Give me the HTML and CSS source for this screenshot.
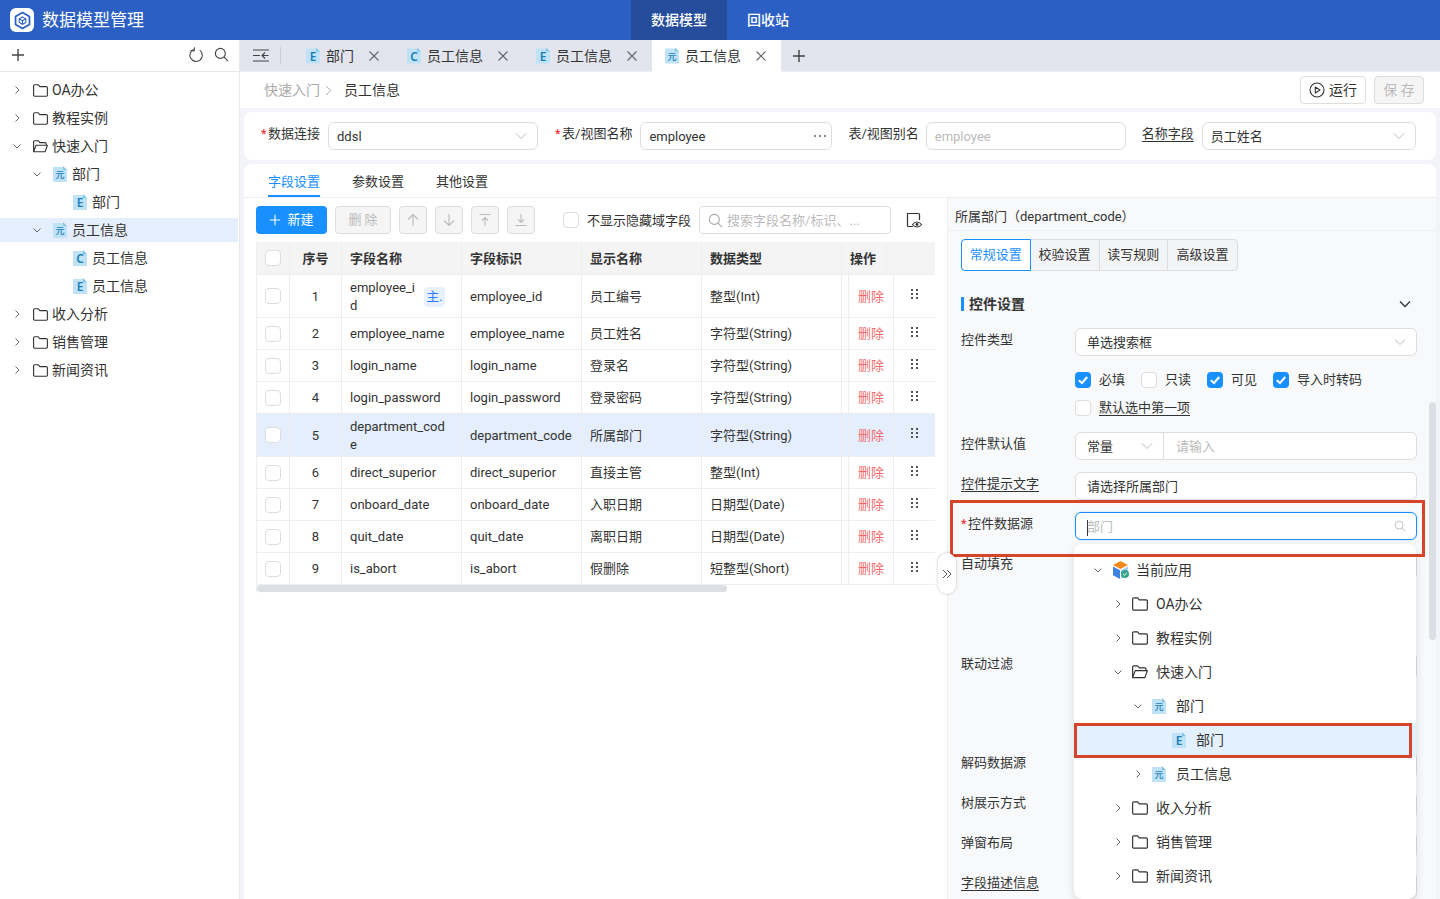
FILE: index.html
```html
<!DOCTYPE html>
<html lang="zh-CN">
<head>
    <meta charset="UTF-8">
    <meta name="viewport" content="width=device-width, initial-scale=1.0">
    <title>数据模型管理</title>
    <link rel="stylesheet" href="styles.css">
</head>
<body>
    <svg class="defs" width="0" height="0">
        <symbol id="folder" viewBox="0 0 15 13"><path d="M.6 2A1.2 1.2 0 0 1 1.8.7h3.4l1.6 1.9h6.4a1.2 1.2 0 0 1 1.2 1.2v7.3a1.2 1.2 0 0 1-1.2 1.2H1.8A1.2 1.2 0 0 1 .6 11.100z" fill="none" stroke="#333" stroke-width="1.1"/></symbol>
        <symbol id="folder-open" viewBox="0 0 15 13"><path d="M.6 11.500V2A1.200 1.200 0 0 1 1.800.7h3.400l1.600 1.900h5.400a1 1 0 0 1 1 1v1.600M.6 11.800 3 5.200h11.400l-2.300 6.600z" fill="none" stroke="#333" stroke-width="1.100" stroke-linejoin="round"/></symbol>
        <symbol id="chev-r" viewBox="0 0 10 10"><path d="M3.500 1.500 7 5 3.500 8.500" fill="none" stroke="#666" stroke-width="1"/></symbol>
        <symbol id="chev-d" viewBox="0 0 10 10"><path d="M1.500 3.500 5 7l3.500-3.500" fill="none" stroke="#666" stroke-width="1"/></symbol>
        <symbol id="chev-big" viewBox="0 0 12 12"><path d="M1 3.500 6 8.500l5-5" fill="none" stroke="#bbb" stroke-width="1"/></symbol>
        <symbol id="x" viewBox="0 0 12 12"><path d="M1.500 1.500l9 9m0-9-9 9" fill="none" stroke="#666" stroke-width="1.100"/></symbol>
        <symbol id="plus" viewBox="0 0 14 14"><path d="M7 1v12M1 7h12" fill="none" stroke="#444" stroke-width="1.400"/></symbol>
        <symbol id="search" viewBox="0 0 16 16"><circle cx="6.800" cy="6.800" r="5.300" fill="none" stroke="currentColor" stroke-width="1.200"/><path d="M10.700 10.700 15 15" fill="none" stroke="currentColor" stroke-width="1.200"/></symbol>
        <symbol id="dots" viewBox="0 0 7 10"><path d="M0 0h2v2H0zM5 0h2v2H5zM0 4h2v2H0zM5 4h2v2H5zM0 8h2v2H0zM5 8h2v2H5z" fill="#555"/></symbol>
        <symbol id="check" viewBox="0 0 16 16"><path d="M3.800 8.200 7 11l5.200-6" fill="none" stroke="#fff" stroke-width="2"/></symbol>
    </svg>

    <header class="topbar">
        <div class="brand">
            <span class="logo">
                <svg width="19" height="19" viewBox="0 0 24 24"><path d="M12 2 20.800 7v10L12 22l-8.800-5V7z" fill="none" stroke="#2b5fc4" stroke-width="2.200" stroke-linejoin="round"/><path d="M12 7.500l4.200 2.300v4.600L12 16.800l-4.200-2.400V9.800zM7.800 9.800 12 12.200l4.200-2.400M12 12.200v4.600" fill="none" stroke="#2b5fc4" stroke-width="1.300"/></svg>
            </span>
            <span class="brand-name">数据模型管理</span>
        </div>
        <nav class="topnav">
            <a class="topnav-item active">数据模型</a>
            <a class="topnav-item">回收站</a>
        </nav>
    </header>

    <div class="app">
        <aside class="sidebar">
            <div class="side-tools">
                <svg class="ic14"><use href="#plus"/></svg>
                <span class="side-tools-right">
                    <svg width="16" height="16" viewBox="0 0 16 16"><path d="M5.500 2.600A6.200 6.200 0 1 0 11 2.700M5.500 .7v3.600H2" fill="none" stroke="#444" stroke-width="1.100" transform="rotate(8 8 8)"/></svg>
                    <svg class="ic-search" width="15" height="15"><use href="#search"/></svg>
                </span>
            </div>
            <ul class="tree">
                <li class="node"><svg class="chev"><use href="#chev-r"/></svg><svg class="fold"><use href="#folder"/></svg>OA办公</li>
                <li class="node"><svg class="chev"><use href="#chev-r"/></svg><svg class="fold"><use href="#folder"/></svg>教程实例</li>
                <li class="node"><svg class="chev"><use href="#chev-d"/></svg><svg class="fold"><use href="#folder-open"/></svg>快速入门</li>
                <li class="node lv1"><svg class="chev"><use href="#chev-d"/></svg><span class="fi fi-y">元</span>部门</li>
                <li class="node lv2"><span class="chev"></span><span class="fi">E</span>部门</li>
                <li class="node lv1 current"><svg class="chev"><use href="#chev-d"/></svg><span class="fi fi-y">元</span>员工信息</li>
                <li class="node lv2"><span class="chev"></span><span class="fi">C</span>员工信息</li>
                <li class="node lv2"><span class="chev"></span><span class="fi">E</span>员工信息</li>
                <li class="node"><svg class="chev"><use href="#chev-r"/></svg><svg class="fold"><use href="#folder"/></svg>收入分析</li>
                <li class="node"><svg class="chev"><use href="#chev-r"/></svg><svg class="fold"><use href="#folder"/></svg>销售管理</li>
                <li class="node"><svg class="chev"><use href="#chev-r"/></svg><svg class="fold"><use href="#folder"/></svg>新闻资讯</li>
            </ul>
        </aside>

        <main class="main">
            <div class="tabbar">
                <span class="tab-toggle">
                    <svg width="16" height="13" viewBox="0 0 16 13"><path d="M0 1h16M0 12h16M0 6.500h7M15.500 6.500H9M12 3.500 9 6.500l3 3" fill="none" stroke="#444" stroke-width="1.100"/></svg>
                </span>
                <div class="tab tab-first"><span class="fi">E</span>部门<svg class="tab-x"><use href="#x"/></svg></div>
                <div class="tab"><span class="fi">C</span>员工信息<svg class="tab-x"><use href="#x"/></svg></div>
                <div class="tab"><span class="fi">E</span>员工信息<svg class="tab-x"><use href="#x"/></svg></div>
                <div class="tab active"><span class="fi fi-y">元</span>员工信息<svg class="tab-x"><use href="#x"/></svg></div>
                <svg class="tab-add"><use href="#plus"/></svg>
            </div>

            <div class="crumbs">
                <span class="crumb-parent">快速入门</span>
                <svg class="crumb-sep" viewBox="0 0 8 12"><path d="M1.500 1 6.500 6l-5 5" fill="none" stroke="#999" stroke-width="1"/></svg>
                <span class="crumb-now">员工信息</span>
                <span class="crumb-actions">
                    <button class="btn-run"><svg width="16" height="16" viewBox="0 0 16 16"><circle cx="8" cy="8" r="7" fill="none" stroke="#333" stroke-width="1.100"/><path d="M6.300 5v6l4.700-3z" fill="none" stroke="#333" stroke-width="1.100" stroke-linejoin="round"/></svg>运行</button>
                    <button class="btn-save">保 存</button>
                </span>
            </div>

            <section class="conn-card">
                <label class="flabel w-conn"><i>*</i>数据连接</label>
                <div class="inp w210">ddsl<svg class="inp-chev"><use href="#chev-big"/></svg></div>
                <label class="flabel w-table"><i>*</i>表/视图名称</label>
                <div class="inp w192">employee<svg class="more" width="12" height="4" viewBox="0 0 12 4"><path d="M0 1h2v2H0zM5 1h2v2H5zM10 1h2v2h-2z" fill="#888"/></svg></div>
                <label class="flabel w-alias">表/视图别名</label>
                <div class="inp w200 ph">employee</div>
                <label class="flabel w-name"><u>名称字段</u></label>
                <div class="inp w214">员工姓名<svg class="inp-chev"><use href="#chev-big"/></svg></div>
            </section>

            <section class="work-card">
                <div class="subtabs">
                    <a class="subtab active">字段设置</a>
                    <a class="subtab">参数设置</a>
                    <a class="subtab">其他设置</a>
                </div>
                <div class="split">
                    <div class="fields">
                        <div class="toolbar">
                            <button class="btn-new"><svg width="12" height="12" viewBox="0 0 14 14"><path d="M7 1v12M1 7h12" fill="none" stroke="#fff" stroke-width="1.300"/></svg>新建</button>
                            <button class="btn-off w56">删 除</button>
                            <button class="btn-off sq"><svg width="14" height="14" viewBox="0 0 14 14"><path d="M7 13V1.500M2 6.500l5-5 5 5" fill="none" stroke="#bbb" stroke-width="1.100"/></svg></button>
                            <button class="btn-off sq"><svg width="14" height="14" viewBox="0 0 14 14"><path d="M7 1v11.500M2 7.500l5 5 5-5" fill="none" stroke="#bbb" stroke-width="1.100"/></svg></button>
                            <button class="btn-off sq"><svg width="14" height="14" viewBox="0 0 14 14"><path d="M1.500 1.500h11M7 13V4.500M4 7.500l3-3 3 3" fill="none" stroke="#bbb" stroke-width="1.100"/></svg></button>
                            <button class="btn-off sq"><svg width="14" height="14" viewBox="0 0 14 14"><path d="M1.500 12.500h11M7 1v8.500M4 6.500l3 3 3-3" fill="none" stroke="#bbb" stroke-width="1.100"/></svg></button>
                            <span class="cb hide-cb"></span><span class="hide-text">不显示隐藏域字段</span>
                            <div class="search"><svg class="search-ic" width="15" height="15"><use href="#search"/></svg>搜索字段名称/标识、...</div>
                            <svg class="eye" width="16" height="16" viewBox="0 0 16 16"><path d="M7 14.500H2.500a1 1 0 0 1-1-1V1.500h11a1 1 0 0 1 1 1V8" fill="none" stroke="#333" stroke-width="1.200"/><path d="M6.500 12.500c2.700-3.300 6.300-3.300 9 0-2.700 3.300-6.300 3.300-9 0z" fill="#fff" stroke="#333" stroke-width="1.100"/><circle cx="11" cy="12.500" r="1.400" fill="#333"/></svg>
                        </div>

                        <div class="grid">
                            <div class="row head">
                                <div class="cell c-check"><span class="cb"></span></div>
                                <div class="cell c-no">序号</div>
                                <div class="cell c-text">字段名称</div>
                                <div class="cell c-text">字段标识</div>
                                <div class="cell c-text">显示名称</div>
                                <div class="cell c-type">数据类型</div>
                                <div class="cell c-ophead">操作</div>
                                <div class="cell c-rest"></div>
                            </div>
                            <div class="row tall">
                                <div class="cell c-check"><span class="cb"></span></div>
                                <div class="cell c-no">1</div>
                                <div class="cell c-text"><span class="wrap short">employee_id</span><span class="tag">主.</span></div>
                                <div class="cell c-text">employee_id</div>
                                <div class="cell c-text">员工编号</div>
                                <div class="cell c-type">整型(Int)</div>
                                <div class="cell c-gap"></div>
                                <div class="cell c-op">删除</div>
                                <div class="cell c-drag"><svg class="dots"><use href="#dots"/></svg></div>
                            </div>
                            <div class="row">
                                <div class="cell c-check"><span class="cb"></span></div>
                                <div class="cell c-no">2</div>
                                <div class="cell c-text">employee_name</div>
                                <div class="cell c-text">employee_name</div>
                                <div class="cell c-text">员工姓名</div>
                                <div class="cell c-type">字符型(String)</div>
                                <div class="cell c-gap"></div>
                                <div class="cell c-op">删除</div>
                                <div class="cell c-drag"><svg class="dots"><use href="#dots"/></svg></div>
                            </div>
                            <div class="row">
                                <div class="cell c-check"><span class="cb"></span></div>
                                <div class="cell c-no">3</div>
                                <div class="cell c-text">login_name</div>
                                <div class="cell c-text">login_name</div>
                                <div class="cell c-text">登录名</div>
                                <div class="cell c-type">字符型(String)</div>
                                <div class="cell c-gap"></div>
                                <div class="cell c-op">删除</div>
                                <div class="cell c-drag"><svg class="dots"><use href="#dots"/></svg></div>
                            </div>
                            <div class="row">
                                <div class="cell c-check"><span class="cb"></span></div>
                                <div class="cell c-no">4</div>
                                <div class="cell c-text">login_password</div>
                                <div class="cell c-text">login_password</div>
                                <div class="cell c-text">登录密码</div>
                                <div class="cell c-type">字符型(String)</div>
                                <div class="cell c-gap"></div>
                                <div class="cell c-op">删除</div>
                                <div class="cell c-drag"><svg class="dots"><use href="#dots"/></svg></div>
                            </div>
                            <div class="row tall picked">
                                <div class="cell c-check"><span class="cb"></span></div>
                                <div class="cell c-no">5</div>
                                <div class="cell c-text"><span class="wrap">department_code</span></div>
                                <div class="cell c-text">department_code</div>
                                <div class="cell c-text">所属部门</div>
                                <div class="cell c-type">字符型(String)</div>
                                <div class="cell c-gap"></div>
                                <div class="cell c-op">删除</div>
                                <div class="cell c-drag"><svg class="dots"><use href="#dots"/></svg></div>
                            </div>
                            <div class="row">
                                <div class="cell c-check"><span class="cb"></span></div>
                                <div class="cell c-no">6</div>
                                <div class="cell c-text">direct_superior</div>
                                <div class="cell c-text">direct_superior</div>
                                <div class="cell c-text">直接主管</div>
                                <div class="cell c-type">整型(Int)</div>
                                <div class="cell c-gap"></div>
                                <div class="cell c-op">删除</div>
                                <div class="cell c-drag"><svg class="dots"><use href="#dots"/></svg></div>
                            </div>
                            <div class="row">
                                <div class="cell c-check"><span class="cb"></span></div>
                                <div class="cell c-no">7</div>
                                <div class="cell c-text">onboard_date</div>
                                <div class="cell c-text">onboard_date</div>
                                <div class="cell c-text">入职日期</div>
                                <div class="cell c-type">日期型(Date)</div>
                                <div class="cell c-gap"></div>
                                <div class="cell c-op">删除</div>
                                <div class="cell c-drag"><svg class="dots"><use href="#dots"/></svg></div>
                            </div>
                            <div class="row">
                                <div class="cell c-check"><span class="cb"></span></div>
                                <div class="cell c-no">8</div>
                                <div class="cell c-text">quit_date</div>
                                <div class="cell c-text">quit_date</div>
                                <div class="cell c-text">离职日期</div>
                                <div class="cell c-type">日期型(Date)</div>
                                <div class="cell c-gap"></div>
                                <div class="cell c-op">删除</div>
                                <div class="cell c-drag"><svg class="dots"><use href="#dots"/></svg></div>
                            </div>
                            <div class="row">
                                <div class="cell c-check"><span class="cb"></span></div>
                                <div class="cell c-no">9</div>
                                <div class="cell c-text">is_abort</div>
                                <div class="cell c-text">is_abort</div>
                                <div class="cell c-text">假删除</div>
                                <div class="cell c-type">短整型(Short)</div>
                                <div class="cell c-gap"></div>
                                <div class="cell c-op">删除</div>
                                <div class="cell c-drag"><svg class="dots"><use href="#dots"/></svg></div>
                            </div>
                            <div class="grid-scroll"><span class="grid-thumb"></span></div>
                        </div>
                    </div>

                    <div class="props">
                        <div class="props-title">所属部门（department_code）</div>
                        <div class="seg">
                            <a class="seg-item active">常规设置</a>
                            <a class="seg-item">校验设置</a>
                            <a class="seg-item">读写规则</a>
                            <a class="seg-item">高级设置</a>
                        </div>
                        <div class="sec-title"><span>控件设置</span><svg width="12" height="12" viewBox="0 0 12 12"><path d="M1 3.500 6 8.500l5-5" fill="none" stroke="#333" stroke-width="1.300"/></svg></div>

                        <div class="pf"><label class="pf-label">控件类型</label><div class="inp grow">单选搜索框<svg class="inp-chev"><use href="#chev-big"/></svg></div></div>
                        <div class="checks">
                            <span class="ck"><span class="cb on"><svg width="16" height="16"><use href="#check"/></svg></span>必填</span>
                            <span class="ck"><span class="cb"></span>只读</span>
                            <span class="ck"><span class="cb on"><svg width="16" height="16"><use href="#check"/></svg></span>可见</span>
                            <span class="ck"><span class="cb on"><svg width="16" height="16"><use href="#check"/></svg></span>导入时转码</span>
                            <span class="ck"><span class="cb"></span><u>默认选中第一项</u></span>
                        </div>
                        <div class="pf"><label class="pf-label">控件默认值</label>
                            <div class="inp grow combo"><span class="combo-left">常量<svg class="inp-chev"><use href="#chev-big"/></svg></span><span class="combo-right">请输入</span></div>
                        </div>
                        <div class="pf"><label class="pf-label"><u>控件提示文字</u></label><div class="inp grow">请选择所属部门</div></div>
                        <div class="pf"><label class="pf-label"><i>*</i>控件数据源</label>
                            <div class="inp grow focus"><span class="caret"></span>部门<svg class="inp-search" width="12" height="12"><use href="#search"/></svg></div>
                        </div>
                        <div class="pf pf-auto"><label class="pf-label">自动填充</label><div class="inp grow"></div></div>
                        <div class="pf pf-link"><label class="pf-label">联动过滤</label><div class="inp grow"></div></div>
                        <div class="pf"><label class="pf-label">解码数据源</label><div class="inp grow"></div></div>
                        <div class="pf"><label class="pf-label">树展示方式</label><div class="inp grow"></div></div>
                        <div class="pf"><label class="pf-label">弹窗布局</label><div class="inp grow"></div></div>
                        <div class="pf"><label class="pf-label"><u>字段描述信息</u></label><div class="inp grow"></div></div>

                        <span class="props-scroll"></span>

                        <div class="dropdown">
                            <div class="dd-node"><svg class="chev"><use href="#chev-d"/></svg>
                                <svg class="dd-app" width="17" height="18" viewBox="0 0 17 18"><path d="M8.500 0 16 4 8.500 8 1 4z" fill="#f08a1d"/><path d="M1 5.500 8 9.200V18L1 14.300z" fill="#3f83e0"/><path d="M9 9.200 16 5.500V12L9 18z" fill="#a9cdf2"/><circle cx="13" cy="13" r="4" fill="#36a58f"/><path d="M11.200 13l1.300 1.300 2.300-2.500" fill="none" stroke="#fff" stroke-width="1"/></svg>当前应用</div>
                            <div class="dd-node l1"><svg class="chev"><use href="#chev-r"/></svg><svg class="dd-fold"><use href="#folder"/></svg>OA办公</div>
                            <div class="dd-node l1"><svg class="chev"><use href="#chev-r"/></svg><svg class="dd-fold"><use href="#folder"/></svg>教程实例</div>
                            <div class="dd-node l1"><svg class="chev"><use href="#chev-d"/></svg><svg class="dd-fold"><use href="#folder-open"/></svg>快速入门</div>
                            <div class="dd-node l2"><svg class="chev"><use href="#chev-d"/></svg><span class="fi fi-y">元</span>部门</div>
                            <div class="dd-node l3 hit"><span class="chev"></span><span class="fi">E</span>部门</div>
                            <div class="dd-node l2"><svg class="chev"><use href="#chev-r"/></svg><span class="fi fi-y">元</span>员工信息</div>
                            <div class="dd-node l1"><svg class="chev"><use href="#chev-r"/></svg><svg class="dd-fold"><use href="#folder"/></svg>收入分析</div>
                            <div class="dd-node l1"><svg class="chev"><use href="#chev-r"/></svg><svg class="dd-fold"><use href="#folder"/></svg>销售管理</div>
                            <div class="dd-node l1"><svg class="chev"><use href="#chev-r"/></svg><svg class="dd-fold"><use href="#folder"/></svg>新闻资讯</div>
                            <span class="mark mark-node"></span>
                        </div>
                        <span class="mark mark-source"></span>
                    </div>
                </div>
                <span class="handle"><svg width="10" height="10" viewBox="0 0 10 10"><path d="M1 1l4 4-4 4M5 1l4 4-4 4" fill="none" stroke="#555" stroke-width="1"/></svg></span>
            </section>
        </main>
    </div>
</body>
</html>
```

FILE: styles.css
```css
* {
    box-sizing: border-box;
}
html, body {
    margin: 0;
    height: 100%;
    overflow: hidden;
}
body {
    font-family: Roboto, "Noto Sans CJK SC", sans-serif;
    font-size: 13px;
    line-height: 18px;
    color: #333;
    background-color: #fff;
}
ul {
    margin: 0;
    padding: 0;
    list-style: none;
}
i {
    display: inline-block;
    width: 7px;
    font-style: normal;
    color: #f5222d;
}
u {
    text-underline-offset: 3px;
}
button {
    font-family: inherit;
    line-height: 18px;
    margin: 0;
    padding: 0;
}
.defs {
    position: absolute;
}

/* file badge used in the trees and tabs */
.fi {
    position: relative;
    width: 14px;
    height: 16px;
    flex: none;
    padding-top: 1px;
    font-family: "Noto Sans", sans-serif;
    font-size: 12px;
    font-weight: 600;
    line-height: 16px;
    text-align: center;
    color: #1a80b8;
    background-color: #bfe2f6;
    clip-path: polygon(0 1px, 10px 1px, 10px 0, 14px 4px, 14px 100%, 0 100%);
}
.fi::after {
    content: "";
    position: absolute;
    right: 0;
    top: 0;
    width: 4px;
    height: 4px;
    background-color: #7fc3ea;
    clip-path: polygon(0 0, 100% 100%, 0 100%);
}
.fi-y {
    font-family: "Noto Sans CJK SC", sans-serif;
    font-size: 9px;
    font-weight: 500;
}

/* top bar */
.topbar {
    height: 40px;
    display: flex;
    background-color: #2b5fc4;
    color: #fff;
}
.brand {
    width: 631px;
    display: flex;
    align-items: center;
    padding-left: 10px;
}
.logo {
    width: 24px;
    height: 24px;
    border-radius: 6px;
    background-color: #fff;
    display: flex;
    align-items: center;
    justify-content: center;
    margin-right: 8px;
}
.brand-name {
    font-size: 17px;
    line-height: 24px;
}
.topnav {
    display: flex;
}
.topnav-item {
    padding: 0 20px;
    font-size: 14px;
    line-height: 40px;
    font-weight: 500;
}
.topnav-item.active {
    background-color: #264d9b;
}

.app {
    display: flex;
    height: 859px;
}

/* left tree */
.sidebar {
    width: 240px;
    flex: none;
    border-right: 1px solid #e8e8e8;
}
.side-tools {
    height: 32px;
    display: flex;
    align-items: center;
    justify-content: space-between;
    padding: 0 10px 2px 11px;
    border-bottom: 1px solid #e8e8e8;
}
.ic14 {
    width: 14px;
    height: 14px;
}
.side-tools-right {
    display: flex;
    align-items: center;
    gap: 10px;
}
.ic-search {
    color: #444;
}
.tree {
    padding-top: 6px;
}
.node {
    height: 24px;
    margin-bottom: 4px;
    margin-right: 1px;
    display: flex;
    align-items: center;
    font-size: 14px;
    line-height: 24px;
    padding-left: 12px;
}
.node.lv1 {
    padding-left: 32px;
}
.node.lv2 {
    padding-left: 52px;
}
.node.current {
    background-color: #e5eefc;
}
.node .fi {
    margin-right: 5px;
}
.chev {
    width: 10px;
    height: 10px;
    flex: none;
    margin-right: 11px;
}
.fold {
    width: 15px;
    height: 13px;
    flex: none;
    margin-right: 4px;
}

/* tabs */
.main {
    flex: 1;
    min-width: 0;
    background-color: #f3f4f7;
}
.tabbar {
    height: 32px;
    display: flex;
    align-items: center;
    background-color: #e2e5ee;
    border-bottom: 1px solid #eff0f4;
    font-size: 14px;
}
.tab-toggle {
    width: 41px;
    height: 17px;
    flex: none;
    display: flex;
    align-items: center;
    padding-left: 13px;
    border-right: 1px solid #c9ccd4;
}
.tab {
    width: 129px;
    height: 32px;
    flex: none;
    display: flex;
    align-items: center;
    padding-left: 13px;
}
.tab-first {
    width: 101px;
    margin-left: 12px;
}
.tab.active {
    background-color: #fff;
}
.tab .fi {
    margin-right: 6px;
}
.tab-x {
    width: 12px;
    height: 12px;
    margin-left: 14px;
}
.tab-add {
    width: 14px;
    height: 14px;
    margin-left: 11px;
}

/* breadcrumb row */
.crumbs {
    height: 36px;
    display: flex;
    align-items: center;
    padding: 0 16px 0 24px;
    background-color: #fff;
    font-size: 14px;
}
.crumb-parent {
    color: #aaa;
    margin-top: -1px;
}
.crumb-now {
    margin-top: -1px;
}
.crumb-sep {
    width: 7px;
    height: 11px;
    margin: 0 12px 0 5px;
}
.crumb-actions {
    margin-left: auto;
    display: flex;
    gap: 8px;
}
.btn-run {
    width: 66px;
    height: 28px;
    display: flex;
    align-items: center;
    justify-content: center;
    gap: 4px;
    font-size: 14px;
    color: #333;
    background-color: #fff;
    border: 1px solid #ddd;
    border-radius: 4px;
}
.btn-save {
    width: 50px;
    height: 28px;
    font-size: 14px;
    color: #bbb;
    background-color: #f5f5f5;
    border: 1px solid #ddd;
    border-radius: 4px;
}

/* connection card */
.conn-card {
    height: 48px;
    margin: 4px 4px 4px 4px;
    padding-right: 20px;
    display: flex;
    align-items: center;
    background-color: #fff;
    border-radius: 8px;
}
.flabel {
    flex: none;
    line-height: 28px;
    margin-top: -4px;
    margin-right: 8px;
}
.w-conn {
    margin-left: 17px;
}
.w-table {
    margin-left: 17px;
}
.w-alias {
    margin-left: 16px;
    margin-right: 7px;
}
.w-name {
    margin-left: 16px;
}
.inp {
    position: relative;
    height: 28px;
    flex: none;
    padding: 0 8px;
    line-height: 27px;
    color: #333;
    background-color: #fff;
    border: 1px solid #ddd;
    border-radius: 6px;
}
.w210 {
    width: 210px;
}
.w192 {
    width: 192px;
}
.w200 {
    width: 200px;
}
.w214 {
    width: 214px;
}
.ph {
    color: #bbb;
}
.inp-chev {
    position: absolute;
    right: 10px;
    top: 7px;
    width: 12px;
    height: 12px;
}
.more {
    position: absolute;
    right: 5px;
    top: 11px;
}

/* field settings card */
.work-card {
    position: relative;
    height: 739px;
    margin: 0 4px;
    background-color: #fff;
    border-radius: 8px 8px 0 0;
}
.subtabs {
    height: 34px;
    display: flex;
    gap: 32px;
    padding-left: 24px;
    border-bottom: 1px solid #eee;
}
.subtab {
    height: 33px;
    line-height: 36px;
}
.subtab.active {
    color: #1890ff;
    border-bottom: 2px solid #1890ff;
}
.split {
    display: flex;
    height: 705px;
}
.fields {
    width: 703px;
    flex: none;
    padding: 8px 0 0 12px;
}

.toolbar {
    height: 28px;
    display: flex;
    align-items: center;
    margin-bottom: 8px;
}
.btn-new {
    width: 71px;
    height: 28px;
    display: flex;
    align-items: center;
    justify-content: center;
    gap: 6px;
    color: #fff;
    font-size: 13px;
    background-color: #1890ff;
    border: none;
    border-radius: 4px;
    margin-right: 8px;
}
.btn-off {
    height: 28px;
    color: #bbb;
    font-size: 13px;
    background-color: #f5f5f5;
    border: 1px solid #ddd;
    border-radius: 4px;
    margin-right: 8px;
    display: flex;
    align-items: center;
    justify-content: center;
}
.w56 {
    width: 56px;
}
.sq {
    width: 28px;
}
.cb {
    width: 16px;
    height: 16px;
    flex: none;
    display: inline-block;
    background-color: #fff;
    border: 1px solid #ddd;
    border-radius: 4px;
}
.cb.on {
    background-color: #1890ff;
    border: none;
}
.cb.on svg {
    display: block;
}
.hide-cb {
    margin-left: 20px;
    margin-right: 8px;
}
.hide-text {
    margin-right: 8px;
    margin-top: 1px;
}
.search {
    width: 192px;
    height: 28px;
    display: flex;
    align-items: center;
    padding: 1px 0 0 8px;
    color: #bbb;
    border: 1px solid #ddd;
    border-radius: 4px;
}
.search-ic {
    margin-right: 4px;
    color: #aaa;
}
.eye {
    margin-left: 15px;
}

/* field table */
.grid {
    width: 679px;
    border-left: 1px solid #eee;
}
.row {
    height: 32px;
    display: flex;
    border-bottom: 1px solid #eee;
}
.row.head {
    height: 33px;
    font-weight: 700;
    background-color: #f4f4f5;
}
.row.tall {
    height: 43px;
}
.row.picked {
    background-color: #e5eefc;
}
.cell {
    flex: none;
    display: flex;
    align-items: center;
    padding: 1px 8px 0;
    border-right: 1px solid #eee;
}
.c-check {
    width: 33px;
    padding: 0 0 0 8px;
}
.c-no {
    width: 52px;
    justify-content: center;
}
.c-text {
    width: 120px;
}
.c-type {
    width: 140px;
}
.c-ophead {
    width: 45px;
}
.c-rest {
    width: 48px;
    border-right: none;
}
.c-gap {
    width: 7px;
    padding: 0;
}
.c-op {
    width: 45px;
    padding: 1px 0 0;
    justify-content: center;
    color: #f56c6c;
}
.c-drag {
    width: 41px;
    padding: 0;
    justify-content: center;
    border-right: none;
}
.dots {
    width: 7px;
    height: 10px;
    margin: -4px 1px 0 0;
}
.wrap {
    width: 98px;
    word-break: break-all;
}
.wrap.short {
    width: 66px;
    flex: none;
}
.tag {
    width: 21px;
    height: 20px;
    flex: none;
    margin-left: 8px;
    text-align: center;
    line-height: 20px;
    color: #2f7cf6;
    background-color: #e6f1fd;
    border-radius: 4px;
}
.grid-scroll {
    height: 8px;
    display: block;
}
.grid-thumb {
    display: block;
    width: 470px;
    height: 7px;
    background-color: #dcdfe4;
    border-radius: 4px;
}

/* right property panel */
.props {
    position: relative;
    flex: 1;
    min-width: 0;
    overflow: hidden;
    padding: 0 19px 0 13px;
    background-color: #f8f9fb;
    border-left: 1px solid #eee;
}
.props-title {
    height: 33px;
    margin: 0 -19px 0 -13px;
    padding-left: 7px;
    line-height: 38px;
    border-bottom: 1px solid #eee;
}
.seg {
    display: flex;
    margin-top: 8px;
    width: 277px;
    height: 32px;
    background-color: #f3f4f6;
    border: 1px solid #ddd;
    border-radius: 4px;
}
.seg-item {
    width: 69px;
    line-height: 30px;
    text-align: center;
    border-right: 1px solid #ddd;
}
.seg-item:last-child {
    border-right: none;
}
.seg-item.active {
    color: #1890ff;
    background-color: #fff;
    margin: -1px 0 -1px -1px;
    width: 70px;
    line-height: 30px;
    border: 1px solid #1890ff;
    border-radius: 4px 0 0 4px;
}
.sec-title {
    height: 14px;
    margin: 26px 0 17px 0;
    padding-left: 5px;
    display: flex;
    align-items: center;
    justify-content: space-between;
    font-size: 14px;
    font-weight: 700;
    border-left: 3px solid #1890ff;
}
.sec-title svg {
    margin-right: 6px;
}
.pf {
    display: flex;
    height: 28px;
    margin-bottom: 12px;
}
.pf-label {
    width: 114px;
    flex: none;
    line-height: 24px;
}
.grow {
    flex: 1;
    min-width: 0;
    padding-left: 11px;
}
.checks {
    margin: -12px 0 0 114px;
    display: flex;
    flex-wrap: wrap;
    align-content: flex-start;
    column-gap: 16px;
    height: 76px;
    padding-top: 10px;
}
.ck {
    height: 28px;
    display: flex;
    align-items: center;
    gap: 8px;
}
.combo {
    display: flex;
    padding: 0;
}
.combo-left {
    position: relative;
    width: 88px;
    padding-left: 11px;
    border-right: 1px solid #ddd;
}
.combo-right {
    padding-left: 12px;
    color: #bbb;
}
.focus {
    color: #bbb;
    border-color: #1890ff;
    box-shadow: 0 0 2px rgba(24, 144, 255, 0.3);
}
.caret {
    display: inline-block;
    width: 1px;
    height: 16px;
    margin-right: -1px;
    vertical-align: middle;
    background-color: #333;
}
.inp-search {
    position: absolute;
    right: 10px;
    top: 7px;
    color: #bbb;
}
.pf-auto {
    margin-bottom: 72px;
}
.pf-link {
    margin-bottom: 71px;
}
.props-scroll {
    position: absolute;
    right: 0;
    top: 204px;
    width: 7px;
    height: 238px;
    background-color: #dcdfe4;
    border-radius: 4px;
}

/* tree popup */
.dropdown {
    position: absolute;
    left: 126px;
    top: 346px;
    width: 342px;
    height: 355px;
    padding-top: 9px;
    background-color: #fff;
    border-radius: 8px;
    box-shadow: 0 3px 10px rgba(0, 0, 0, 0.12);
    font-size: 14px;
}
.dd-node {
    height: 34px;
    display: flex;
    align-items: center;
    padding-left: 19px;
    line-height: 34px;
}
.dd-node.l1 {
    padding-left: 39px;
}
.dd-node.l2 {
    padding-left: 59px;
}
.dd-node.l3 {
    padding-left: 79px;
}
.dd-node.hit {
    background-color: #e3f1fe;
}
.dd-app {
    margin-right: 7px;
    flex: none;
}
.dd-fold {
    width: 16px;
    height: 14px;
    margin-right: 8px;
    flex: none;
}
.dd-node .fi {
    margin-right: 10px;
}
.dd-node .chev {
    margin-right: 9px;
}

/* red callouts, drawn on top of the form */
.mark {
    position: absolute;
    border: 3px solid #d4452b;
    pointer-events: none;
}
.mark-source {
    left: 2px;
    top: 302px;
    width: 475px;
    height: 57px;
}
.mark-node {
    left: 0;
    top: 179px;
    width: 338px;
    height: 35px;
}

.handle {
    position: absolute;
    left: 694px;
    top: 389px;
    width: 18px;
    height: 41px;
    display: flex;
    align-items: center;
    justify-content: center;
    background-color: #fff;
    border-radius: 9px;
    box-shadow: 0 0 3px rgba(0, 0, 0, 0.25);
}
```
